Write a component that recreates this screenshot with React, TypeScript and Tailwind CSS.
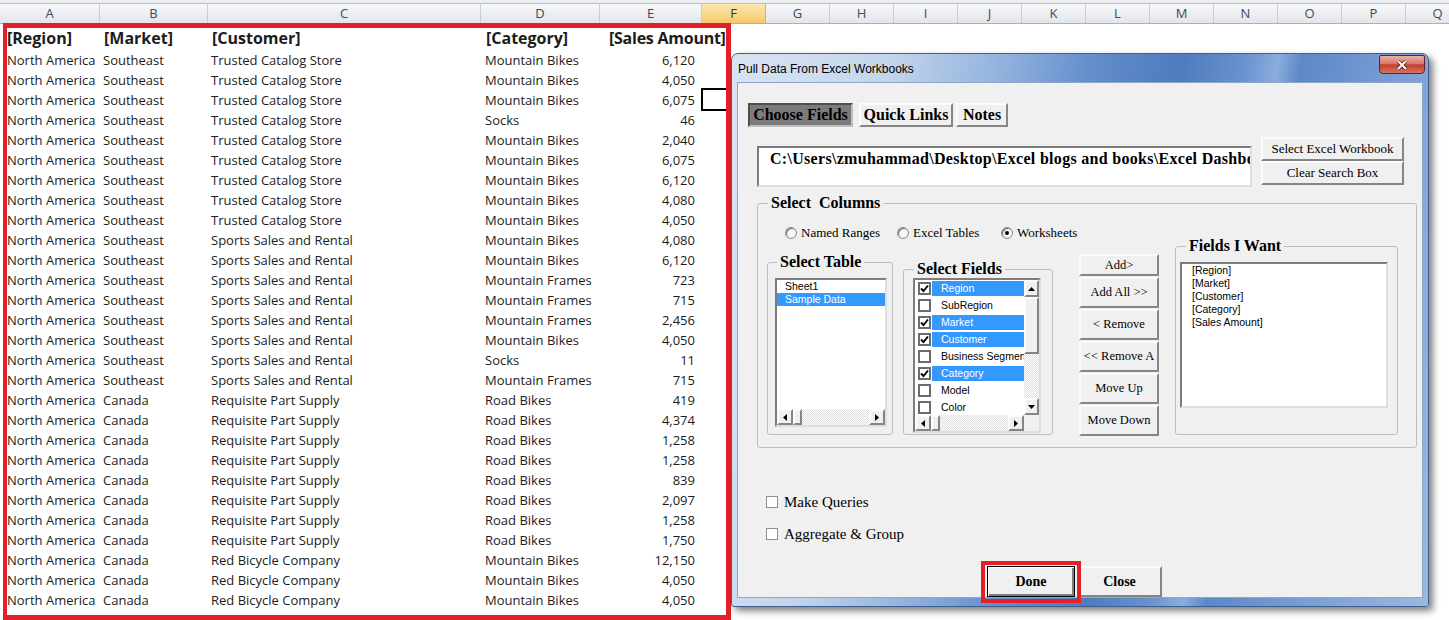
import type { ReactNode } from "react";

type Row = [string, string, string, string, string];

const data: Row[] = [
  ["North America", "Southeast", "Trusted Catalog Store", "Mountain Bikes", "6,120"],
  ["North America", "Southeast", "Trusted Catalog Store", "Mountain Bikes", "4,050"],
  ["North America", "Southeast", "Trusted Catalog Store", "Mountain Bikes", "6,075"],
  ["North America", "Southeast", "Trusted Catalog Store", "Socks", "46"],
  ["North America", "Southeast", "Trusted Catalog Store", "Mountain Bikes", "2,040"],
  ["North America", "Southeast", "Trusted Catalog Store", "Mountain Bikes", "6,075"],
  ["North America", "Southeast", "Trusted Catalog Store", "Mountain Bikes", "6,120"],
  ["North America", "Southeast", "Trusted Catalog Store", "Mountain Bikes", "4,080"],
  ["North America", "Southeast", "Trusted Catalog Store", "Mountain Bikes", "4,050"],
  ["North America", "Southeast", "Sports Sales and Rental", "Mountain Bikes", "4,080"],
  ["North America", "Southeast", "Sports Sales and Rental", "Mountain Bikes", "6,120"],
  ["North America", "Southeast", "Sports Sales and Rental", "Mountain Frames", "723"],
  ["North America", "Southeast", "Sports Sales and Rental", "Mountain Frames", "715"],
  ["North America", "Southeast", "Sports Sales and Rental", "Mountain Frames", "2,456"],
  ["North America", "Southeast", "Sports Sales and Rental", "Mountain Bikes", "4,050"],
  ["North America", "Southeast", "Sports Sales and Rental", "Socks", "11"],
  ["North America", "Southeast", "Sports Sales and Rental", "Mountain Frames", "715"],
  ["North America", "Canada", "Requisite Part Supply", "Road Bikes", "419"],
  ["North America", "Canada", "Requisite Part Supply", "Road Bikes", "4,374"],
  ["North America", "Canada", "Requisite Part Supply", "Road Bikes", "1,258"],
  ["North America", "Canada", "Requisite Part Supply", "Road Bikes", "1,258"],
  ["North America", "Canada", "Requisite Part Supply", "Road Bikes", "839"],
  ["North America", "Canada", "Requisite Part Supply", "Road Bikes", "2,097"],
  ["North America", "Canada", "Requisite Part Supply", "Road Bikes", "1,258"],
  ["North America", "Canada", "Requisite Part Supply", "Road Bikes", "1,750"],
  ["North America", "Canada", "Red Bicycle Company", "Mountain Bikes", "12,150"],
  ["North America", "Canada", "Red Bicycle Company", "Mountain Bikes", "4,050"],
  ["North America", "Canada", "Red Bicycle Company", "Mountain Bikes", "4,050"],
];

const columns = [
  { name: "A", width: "w-[100px]" },
  { name: "B", width: "w-[108px]" },
  { name: "C", width: "w-[273px]" },
  { name: "D", width: "w-[119px]" },
  { name: "E", width: "w-[102px]" },
  { name: "F", width: "w-[64px]", active: true },
  { name: "G", width: "w-[64px]" },
  { name: "H", width: "w-[64px]" },
  { name: "I", width: "w-[64px]" },
  { name: "J", width: "w-[64px]" },
  { name: "K", width: "w-[64px]" },
  { name: "L", width: "w-[64px]" },
  { name: "M", width: "w-[64px]" },
  { name: "N", width: "w-[64px]" },
  { name: "O", width: "w-[64px]" },
  { name: "P", width: "w-[64px]" },
  { name: "Q", width: "w-[64px]" },
];

const fields = [
  { name: "Region", on: true },
  { name: "SubRegion", on: false },
  { name: "Market", on: true },
  { name: "Customer", on: true },
  { name: "Business Segment", on: false },
  { name: "Category", on: true },
  { name: "Model", on: false },
  { name: "Color", on: false },
];

const wanted = ["[Region]", "[Market]", "[Customer]", "[Category]", "[Sales Amount]"];

function Raised({ className = "", children }: { className?: string; children?: ReactNode }) {
  return (
    <div
      className={`flex items-center justify-center bg-[#f0f0f0] border-2 border-t-[#fcfcfc] border-l-[#fcfcfc] border-r-[#858585] border-b-[#858585] ${className}`}
    >
      {children}
    </div>
  );
}

function Arrow({ dir }: { dir: "up" | "down" | "left" | "right" }) {
  const vertical = dir === "up" || dir === "down";
  const pts = {
    up: "0,4 3.5,0 7,4",
    down: "0,0 3.5,4 7,0",
    left: "4,0 0,3.5 4,7",
    right: "0,0 4,3.5 0,7",
  }[dir];
  return (
    <svg width={vertical ? 7 : 4} height={vertical ? 4 : 7} viewBox={vertical ? "0 0 7 4" : "0 0 4 7"}>
      <polygon points={pts} fill="#000" />
    </svg>
  );
}

const track =
  "bg-[repeating-conic-gradient(#dedede_0%_25%,#ffffff_0%_50%)] bg-size-[2px_2px]";

function HScroll({ thumb = "w-[9px]" }: { thumb?: string }) {
  return (
    <div className="flex h-[16px] shrink-0">
      <Raised className="w-[16px] h-[16px]">
        <Arrow dir="left" />
      </Raised>
      <Raised className={`${thumb} h-[16px]`} />
      <div className={`flex-1 ${track}`} />
      <Raised className="w-[16px] h-[16px]">
        <Arrow dir="right" />
      </Raised>
    </div>
  );
}

function Radio({ on }: { on?: boolean }) {
  return (
    <span className="w-[12px] h-[12px] shrink-0 rounded-full border border-[#8c8c8c] bg-[radial-gradient(circle_at_60%_60%,#ffffff,#e2e2e2)] shadow-[inset_1px_1px_0_#777] flex items-center justify-center">
      {on && <span className="w-[4px] h-[4px] rounded-full bg-black" />}
    </span>
  );
}

function Check({ on }: { on: boolean }) {
  return (
    <span className="w-[13px] h-[13px] shrink-0 border-2 border-[#6c6c6c] bg-white flex items-center justify-center">
      {on && (
        <svg width="9" height="9" viewBox="0 0 9 9">
          <polyline points="1,4.5 3.5,7 8,1.5" fill="none" stroke="#000" strokeWidth="1.9" />
        </svg>
      )}
    </span>
  );
}

const sunken =
  "border-2 border-t-[#7d7d7d] border-l-[#7d7d7d] border-r-[#dedede] border-b-[#dedede] bg-white";

function Dialog() {
  return (
    <div className="absolute left-[731px] top-[53px] w-[698px] h-[554px] flex flex-col rounded-t-[7px] rounded-b-[3px] border border-[#3f5f8e] bg-[linear-gradient(100deg,#d9e4f2_0%,#c3d5ec_20%,#8fb0dd_35%,#6690cc_45%,#5a86c6_50%,#4e7cbd_57%,#6a93cf_65%,#8badde_69%,#5d88c7_72%,#7b9fd5_85%,#9cb8e0_100%)] shadow-[4px_4px_7px_rgba(0,0,0,0.5)]">
      <div className="h-[28px] shrink-0 flex items-start">
        <span className="ml-[6px] mt-[8px] leading-[14px] text-[12px] text-black font-['Liberation_Sans',Arial,sans-serif]">
          Pull Data From Excel Workbooks
        </span>
        <div className="ml-auto mr-[3px] mt-[1px] w-[46px] h-[19px] rounded-b-[4px] rounded-t-[2px] border border-[#6b2118] bg-[linear-gradient(#eab0a4,#d77a69_45%,#c0402d_52%,#d47462)] flex items-center justify-center">
          <svg width="14" height="10" viewBox="0 0 14 10">
            <path d="M3 1 L11 9 M11 1 L3 9" stroke="#5a1a12" strokeWidth="3.6" />
            <path d="M3 1 L11 9 M11 1 L3 9" stroke="#fff" strokeWidth="2" />
          </svg>
        </div>
      </div>
      <div className="flex-1 px-[5px] pb-[8px]">
        <div className="h-full flex flex-col bg-[#f0f0f0] border border-[#8ea6c8] text-black font-['Liberation_Serif','Times_New_Roman',serif]">
          {/* tabs */}
          <div className="ml-[10px] mt-[20px] flex h-[24px] text-[16px] font-bold">
            <div className="w-[105px] flex items-center justify-center bg-[#7b7b7b] border-2 border-t-[#4e4e4e] border-l-[#4e4e4e] border-r-[#bdbdbd] border-b-[#bdbdbd]">
              Choose Fields
            </div>
            <Raised className="ml-[6px] w-[94px]">Quick Links</Raised>
            <Raised className="ml-[3px] w-[52px]">Notes</Raised>
          </div>

          {/* path */}
          <div className="mt-[10px] flex items-start">
            <div className={`ml-[19px] mt-[9px] w-[495px] h-[41px] overflow-hidden whitespace-nowrap pl-[11px] pt-[3px] leading-[16px] text-[16px] tracking-[0.3px] font-bold ${sunken}`}>
              C:\Users\zmuhammad\Desktop\Excel blogs and books\Excel Dashboards
            </div>
            <div className="ml-[9px] w-[143px] flex flex-col text-[13px]">
              <Raised className="h-[24px]">Select Excel Workbook</Raised>
              <Raised className="h-[24px]">Clear Search Box</Raised>
            </div>
          </div>

          {/* select columns */}
          <fieldset className="ml-[19px] mt-[7px] w-[660px] h-[254px] border border-[#bdbdbd] rounded-[3px]">
            <legend className="ml-[10px] px-[3px] leading-[18px] text-[16px] font-bold whitespace-pre">
              Select  Columns
            </legend>
            <div className="flex items-start">
              <div className="w-[401px] shrink-0">
                <div className="mt-[13px] ml-[27px] h-[16px] flex items-center text-[13px]">
                  <div className="w-[112px] flex items-center gap-[4px]">
                    <Radio />
                    <span>Named Ranges</span>
                  </div>
                  <div className="w-[104px] flex items-center gap-[4px]">
                    <Radio />
                    <span>Excel Tables</span>
                  </div>
                  <div className="flex items-center gap-[4px]">
                    <Radio on />
                    <span>Worksheets</span>
                  </div>
                </div>

                <div className="flex items-start">
                  <fieldset className="ml-[9px] mt-[12px] w-[126px] h-[182px] border border-[#bdbdbd] rounded-[3px]">
                    <legend className="ml-[9px] px-[3px] leading-[18px] text-[16px] font-bold">Select Table</legend>
                    <div className={`ml-[7px] mt-[7px] w-[112px] h-[149px] flex flex-col font-['Liberation_Sans',Arial,sans-serif] text-[10.5px] ${sunken}`}>
                      <div className="h-[13px] leading-[13px] pl-[8px]">Sheet1</div>
                      <div className="h-[13px] leading-[13px] pl-[8px] bg-[#3399ff] text-white">Sample Data</div>
                      <div className="flex-1" />
                      <HScroll />
                    </div>
                  </fieldset>

                  <fieldset className="ml-[10px] mt-[19px] w-[150px] h-[175px] border border-[#bdbdbd] rounded-[3px]">
                    <legend className="ml-[10px] px-[3px] leading-[18px] text-[16px] font-bold">Select Fields</legend>
                    <div className={`ml-[9px] w-[128px] h-[155px] flex flex-col font-['Liberation_Sans',Arial,sans-serif] text-[10.5px] ${sunken}`}>
                      <div className="flex h-[135px]">
                        <div className="flex-1 overflow-hidden">
                          {fields.map((f) => (
                            <div key={f.name} className="h-[17px] flex items-center">
                              <span className="ml-[3px]">
                                <Check on={f.on} />
                              </span>
                              <span
                                className={`ml-[1px] flex-1 h-[15px] leading-[15px] pl-[9px] whitespace-nowrap overflow-hidden ${f.on ? "bg-[#3399ff] text-white" : ""}`}
                              >
                                {f.name}
                              </span>
                            </div>
                          ))}
                        </div>
                        <div className="w-[15px] flex flex-col">
                          <Raised className="h-[17px]">
                            <Arrow dir="up" />
                          </Raised>
                          <Raised className="h-[57px]" />
                          <div className={`flex-1 ${track}`} />
                          <Raised className="h-[17px]">
                            <Arrow dir="down" />
                          </Raised>
                        </div>
                      </div>
                      <div className="flex">
                        <div className="flex-1">
                          <HScroll />
                        </div>
                        <div className="w-[15px] bg-[#f0f0f0]" />
                      </div>
                    </div>
                  </fieldset>

                  <div className="ml-[26px] mt-[13px] w-[80px] flex flex-col gap-[1px] text-[12.5px]">
                    <Raised className="h-[22px]">Add&gt;</Raised>
                    <Raised className="h-[31px]">Add All &gt;&gt;</Raised>
                    <Raised className="h-[31px]">&lt; Remove</Raised>
                    <Raised className="h-[31px] whitespace-nowrap overflow-hidden">&lt;&lt; Remove A</Raised>
                    <Raised className="h-[31px]">Move Up</Raised>
                    <Raised className="h-[31px]">Move Down</Raised>
                  </div>
                </div>
              </div>

              <fieldset className="ml-[16px] mt-[25px] w-[223px] h-[198px] border border-[#bdbdbd] rounded-[3px]">
                <legend className="ml-[10px] px-[3px] leading-[18px] text-[16px] font-bold">Fields I Want</legend>
                <div className={`ml-[4px] mt-[7px] w-[208px] h-[146px] font-['Liberation_Sans',Arial,sans-serif] text-[10.5px] ${sunken}`}>
                  {wanted.map((w) => (
                    <div key={w} className="h-[13px] leading-[13px] pl-[10px]">
                      {w}
                    </div>
                  ))}
                </div>
              </fieldset>
            </div>
          </fieldset>

          {/* options */}
          <div className="ml-[28px] mt-[46px] h-[16px] flex items-center text-[15px]">
            <span className="w-[12px] h-[12px] border border-[#8f8f8f] bg-white" />
            <span className="ml-[6px]">Make Queries</span>
          </div>
          <div className="ml-[28px] mt-[16px] h-[16px] flex items-center text-[15px]">
            <span className="w-[12px] h-[12px] border border-[#8f8f8f] bg-white" />
            <span className="ml-[6px]">Aggregate &amp; Group</span>
          </div>

          <div className="ml-[249px] mt-[24px] flex text-[14px] font-bold">
            <div className="relative w-[88px] h-[31px] flex items-center justify-center bg-[#f0f0f0] border border-black shadow-[inset_1px_1px_0_#fff,inset_-2px_-2px_0_#7d7d7d]">
              Done
              <div className="absolute -left-[7px] -right-[7px] -top-[6px] -bottom-[7px] border-4 border-[#e3202a]" />
            </div>
            <Raised className="ml-[2px] w-[85px] h-[31px]">Close</Raised>
          </div>
        </div>
      </div>
    </div>
  );
}

export default function App() {
  return (
    <div className="relative w-[1449px] h-[620px] overflow-hidden bg-white font-['Open_Sans','Liberation_Sans',sans-serif]">
      <div className="h-[4px] bg-[#eceef1] border-b border-[#b9c0c9]" />
      <div className="flex h-[20px] bg-[linear-gradient(#f7f8fa,#e2e5ea)] border-b border-[#a3b3c6]">
        {columns.map((c) => (
          <div
            key={c.name}
            className={`${c.width} shrink-0 flex items-center justify-center border-r text-[13px] ${c.active ? "bg-[linear-gradient(#fce6b2,#f6ca6a)] border-[#e0b255] text-[#3b3b3b]" : "border-[#c8cdd4] text-[#3f4a58]"}`}
          >
            {c.name}
          </div>
        ))}
      </div>

      {/* selected cell */}
      <div className="absolute left-[701px] top-[88px] w-[64px] h-[23px] border-2 border-black" />

      <div className="relative ml-[3px] -mt-[1px] w-[728px] h-[597px] border-t-[5px] border-r-[5px] border-b-[5px] border-l-4 border-[#e3202a] text-[#1c1c1c]">
        <div className="flex h-[23px] pb-[3px] items-center text-[16px] font-bold whitespace-nowrap">
          <div className="w-[93px] shrink-0">[Region]</div>
          <div className="w-[108px] shrink-0 pl-[4px]">[Market]</div>
          <div className="w-[273px] shrink-0 pl-[4px]">[Customer]</div>
          <div className="w-[119px] shrink-0 pl-[5px]">[Category]</div>
          <div className="shrink-0 pl-[9px] tracking-[-0.25px]">[Sales Amount]</div>
        </div>
        {data.map((r, i) => (
          <div key={i} className="flex h-[20px] items-center text-[13px] whitespace-nowrap">
            <div className="w-[93px] shrink-0">{r[0]}</div>
            <div className="w-[108px] shrink-0 pl-[3px]">{r[1]}</div>
            <div className="w-[273px] shrink-0 pl-[3px]">{r[2]}</div>
            <div className="w-[119px] shrink-0 pl-[4px]">{r[3]}</div>
            <div className="w-[102px] shrink-0 pr-[7px] text-right">{r[4]}</div>
          </div>
        ))}
      </div>

      <Dialog />
    </div>
  );
}
